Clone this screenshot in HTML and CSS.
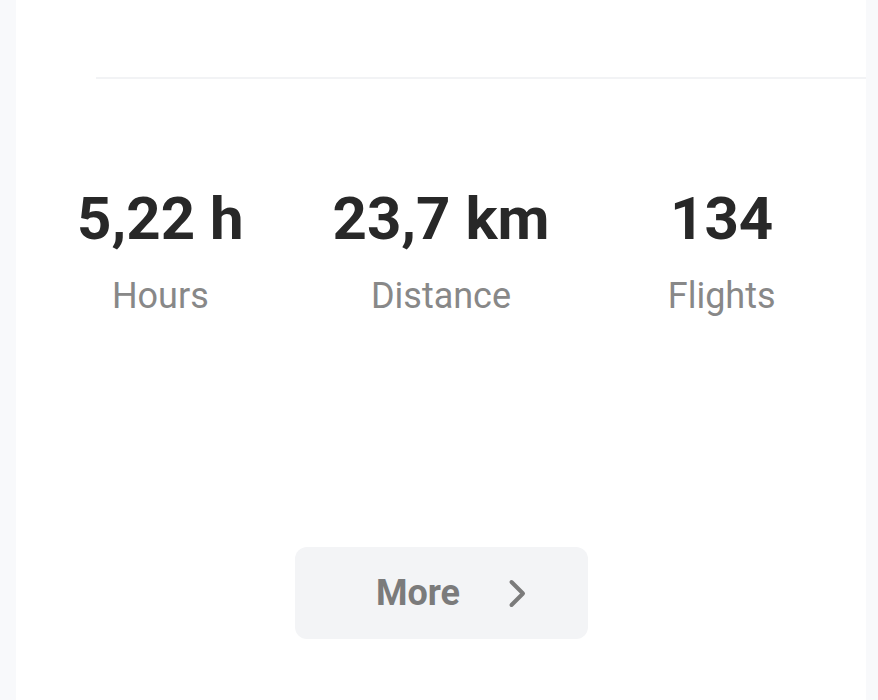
FILE: index.html
```html
<!DOCTYPE html>
<html lang="en">
<head>
<meta charset="utf-8">
<title>Stats</title>
<link rel="stylesheet" href="styles.css">
</head>
<body>
<main class="card">
  <div class="divider"></div>
  <section class="stats">
    <div class="stat">
      <div class="value">5,22 h</div>
      <div class="label">Hours</div>
    </div>
    <div class="stat">
      <div class="value">23,7 km</div>
      <div class="label">Distance</div>
    </div>
    <div class="stat">
      <div class="value">134</div>
      <div class="label">Flights</div>
    </div>
  </section>
  <div class="actions">
    <button class="more" type="button">
      <span class="more-text">More</span>
      <svg class="chevron" width="18" height="29" viewBox="0 0 18 29" aria-hidden="true">
        <path d="M3.5 3 L15 14.5 L3.5 26" fill="none" stroke="#7b7b7b" stroke-width="4" stroke-linecap="round" stroke-linejoin="round"/>
      </svg>
    </button>
  </div>
</main>
</body>
</html>
```
FILE: styles.css
```css
html, body {
  margin: 0;
  padding: 0;
}
body {
  background: #f8f9fb;
  font-family: Roboto, "Liberation Sans", Arial, sans-serif;
  height: 700px;
  overflow: hidden;
}
.card {
  margin: 0 12px 0 16px;
  height: 700px;
  background: #ffffff;
  display: flex;
  flex-direction: column;
  padding-top: 77px;
  box-sizing: border-box;
}
.divider {
  margin-left: 80px;
  height: 2px;
  background: #f2f3f5;
}
.stats {
  display: grid;
  grid-template-columns: repeat(3, 1fr);
  padding: 0 4px;
  margin-top: 110px;
}
.stat {
  display: flex;
  flex-direction: column;
  align-items: center;
}
.value {
  font-size: 60px;
  line-height: 60px;
  font-weight: 700;
  color: #282828;
}
.label {
  margin-top: 29px;
  font-size: 36px;
  line-height: 36px;
  font-weight: 400;
  color: #888888;
}
.actions {
  display: flex;
  justify-content: center;
  margin-top: 233px;
}
.more {
  width: 293px;
  height: 92px;
  border: none;
  border-radius: 12px;
  background: #f3f4f6;
  display: flex;
  align-items: center;
  justify-content: center;
  gap: 48px;
  padding: 0 0 0 20px;
  font-family: inherit;
  cursor: pointer;
}
.more-text {
  font-size: 36px;
  line-height: 36px;
  font-weight: 700;
  color: #7b7b7b;
}
.chevron {
  display: block;
}
```
